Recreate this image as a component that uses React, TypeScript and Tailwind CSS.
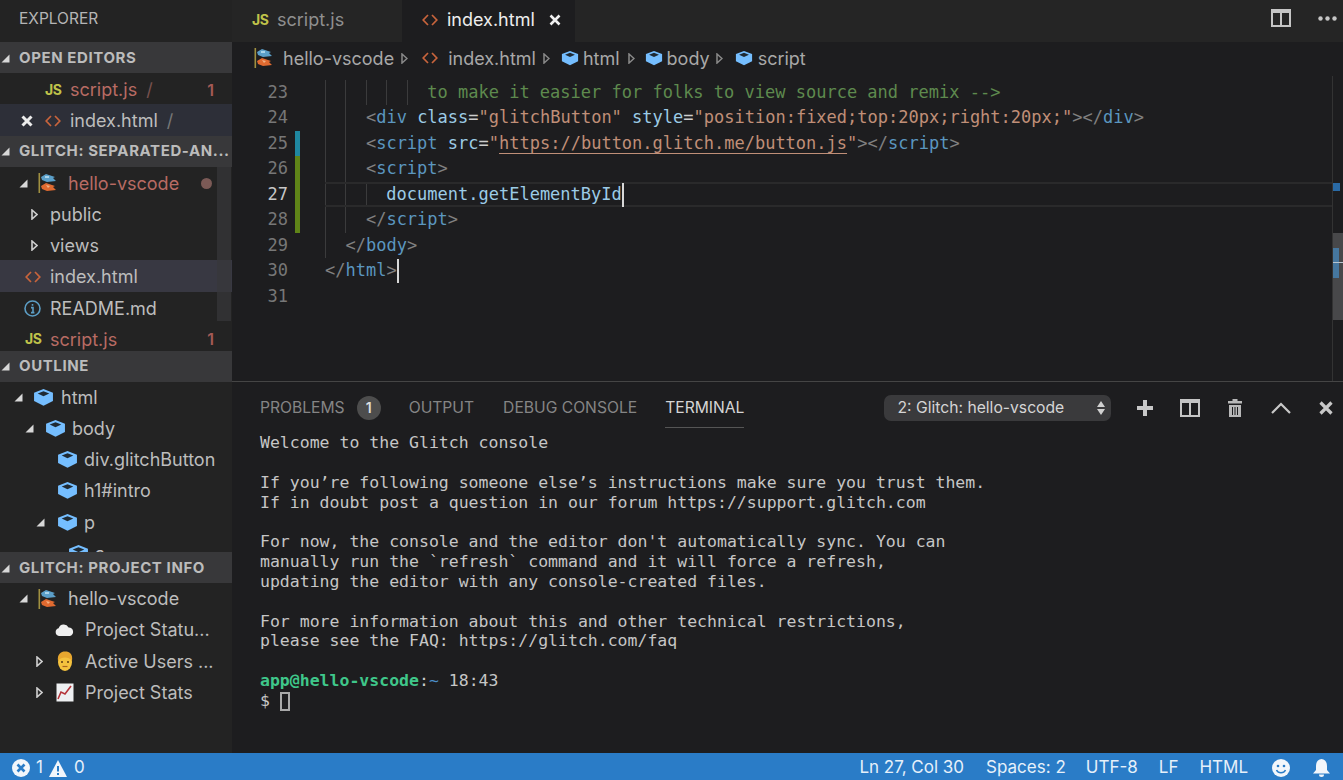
import React from "react";

const Box = ({ s = 21 }: { s?: number }) => (
  <svg width={s} height={s * 0.9} viewBox="0 0 20 18" className="shrink-0">
    <path d="M10 1 L19 4.5 V12.5 L10 17 L1 12.5 V4.5 Z" fill="#75beff" />
    <path d="M10 3 L15.5 5.2 L10 7.8 L4.5 5.2 Z" fill="#1f2a33" />
  </svg>
);
const Flag = () => (
  <svg width="18" height="20" viewBox="0 0 18 20" className="shrink-0">
    <rect x="0.5" y="0" width="1.6" height="20" fill="#a09040" />
    <path d="M3 4 L8 1 L17 4 L15 5 L18 8 L9 9 L4 7 Z" fill="#5b9fc9" />
    <path d="M7 3 L11 3 L11 5 L7 5 Z" fill="#a9d3ea" />
    <path d="M3 13 L8 10 L17 13 L15 14 L18 17 L9 18 L4 16 Z" fill="#e06a30" />
    <path d="M8 12 L12 13 L10 15 Z" fill="#f2b184" />
  </svg>
);
const Code = ({ c = "#c8643c" }: { c?: string }) => (
  <svg width="16" height="12" viewBox="0 0 16 12" fill="none" stroke={c} strokeWidth="1.7" className="shrink-0">
    <path d="M6 1 L1.2 6 L6 11 M10 1 L14.8 6 L10 11" />
  </svg>
);
const Js = () => <span className="shrink-0 w-[16px] text-[14px] font-bold text-[#c0c34a] leading-none tracking-[-0.5px]">JS</span>;
const Open = () => (
  <svg width="9" height="9" viewBox="0 0 9 9" className="shrink-0"><path d="M8.5 0.5 V8.5 H0.5 Z" fill="#d8d8d8" /></svg>
);
const Closed = () => (
  <svg width="7" height="11" viewBox="0 0 7 11" className="shrink-0"><path d="M1 1 L6 5.5 L1 10 Z" fill="#2a2a2a" stroke="#d0d0d0" strokeWidth="1.6" /></svg>
);
const Row = ({ pad, bg = "", children }: { pad: string; bg?: string; children: React.ReactNode }) => (
  <div className={`flex h-[31.25px] shrink-0 items-center whitespace-nowrap text-[18px] text-[#bdbdbd] ${pad} ${bg}`}>{children}</div>
);
const Header = ({ label }: { label: string }) => (
  <div className="flex h-[31px] shrink-0 items-center whitespace-nowrap bg-[#38383a] pl-[1px] pt-[1px] text-[15px] font-bold tracking-[0.6px] text-[#bcbcbc]">
    <span className="w-[18px]"><Open /></span>
    {label}
  </div>
);
const Err = ({ className = "" }: { className?: string }) => <span className={`text-[16px] font-semibold text-[#a35a55] ${className}`}>1</span>;

function Sidebar() {
  return (
    <div className="relative flex w-[232px] shrink-0 flex-col overflow-hidden bg-[#232323]">
      <div className="flex h-[42px] shrink-0 items-center pb-[4px] pl-[19px] text-[15.5px] text-[#b5b5b5]">EXPLORER</div>
      <Header label="OPEN EDITORS" />
      <Row pad="pl-[45px] pr-[18px] pt-[2px]"><Js /><span className="ml-[9px] text-[#b86b63]">script.js</span><span className="ml-[9px] text-[#77514e]">/</span><Err className="ml-auto" /></Row>
      <Row pad="pl-[21px] pt-[2px]" bg="bg-[#2d2f38]">
        <svg width="12" height="12" viewBox="0 0 12 12" className="shrink-0"><path d="M1.5 1.5 L10.5 10.5 M10.5 1.5 L1.5 10.5" stroke="#ececec" strokeWidth="3" /></svg>
        <span className="ml-[12px]"><Code /></span><span className="ml-[9px]">index.html</span><span className="ml-[9px] text-[#777]">/</span>
      </Row>
      <Header label="GLITCH: SEPARATED-AN..." />
      <div className="h-[184px] shrink-0 overflow-hidden">
        <Row pad="pl-[19px] pr-[20px] pt-[2px]"><Open /><span className="ml-[10px]"><Flag /></span><span className="ml-[12px] text-[#b86b63]">hello-vscode</span><span className="ml-auto h-[11px] w-[11px] rounded-full bg-[#7b5a56]" /></Row>
        <Row pad="pl-[31px] pt-[2px]"><Closed /><span className="ml-[12px]">public</span></Row>
        <Row pad="pl-[31px] pt-[2px]"><Closed /><span className="ml-[12px]">views</span></Row>
        <Row pad="pl-[25px] pt-[2px]" bg="bg-[#383842]"><Code /><span className="ml-[9px]">index.html</span></Row>
        <Row pad="pl-[24px] pt-[2px]">
          <svg width="17" height="17" viewBox="0 0 17 17" className="shrink-0"><circle cx="8.5" cy="8.5" r="7.5" fill="none" stroke="#5c9dc4" strokeWidth="1.6" /><path d="M8.5 4 V5.8 M7 7.6 H9 V12.4 M7 12.6 H10.4" stroke="#5c9dc4" strokeWidth="1.6" fill="none" /></svg>
          <span className="ml-[9px]">README.md</span>
        </Row>
        <Row pad="pl-[25px] pr-[18px] pt-[2px]"><Js /><span className="ml-[9px] text-[#b86b63]">script.js</span><Err className="ml-auto" /></Row>
      </div>
      <Header label="OUTLINE" />
      <div className="h-[170.5px] shrink-0 overflow-hidden">
        <Row pad="pl-[14px]"><Open /><span className="ml-[10px]"><Box /></span><span className="ml-[7px]">html</span></Row>
        <Row pad="pl-[25px]"><Open /><span className="ml-[11px]"><Box /></span><span className="ml-[6px]">body</span></Row>
        <Row pad="pl-[57px]"><Box /><span className="ml-[6px]">div.glitchButton</span></Row>
        <Row pad="pl-[57px]"><Box /><span className="ml-[6px]">h1#intro</span></Row>
        <Row pad="pl-[36px]"><Open /><span className="ml-[12px]"><Box /></span><span className="ml-[6px]">p</span></Row>
        <Row pad="pl-[68px]"><Box /><span className="ml-[6px]">a</span></Row>
      </div>
      <Header label="GLITCH: PROJECT INFO" />
      <div className="flex-1">
        <Row pad="pl-[19px]"><Open /><span className="ml-[10px]"><Flag /></span><span className="ml-[12px]">hello-vscode</span></Row>
        <Row pad="pl-[55px]">
          <svg width="19" height="12" viewBox="0 0 19 12" className="shrink-0"><path d="M4 12 A4 4 0 0 1 3.6 4.2 A5.5 5.5 0 0 1 13.6 3.4 A4.4 4.4 0 0 1 15 12 Z" fill="#efefef" /></svg>
          <span className="ml-[11px]">Project Statu...</span>
        </Row>
        <Row pad="pl-[36px]">
          <Closed />
          <svg width="18" height="21" viewBox="0 0 18 21" className="ml-[13px] shrink-0">
            <ellipse cx="9" cy="11" rx="7" ry="9" fill="#f5c23e" />
            <path d="M2 10 C1 3 5 0.5 9 0.5 C14 0.5 17 3 16 10 C14 7 12 6.5 9 6.5 C6 6.5 4 7 2 10 Z" fill="#e8a72f" />
            <circle cx="6" cy="11" r="1" fill="#5b3a12" /><circle cx="12" cy="11" r="1" fill="#5b3a12" />
            <path d="M6.5 15.5 H11.5" stroke="#a8641e" strokeWidth="1.2" />
          </svg>
          <span className="ml-[11px]">Active Users ...</span>
        </Row>
        <Row pad="pl-[36px]">
          <Closed />
          <svg width="18" height="19" viewBox="0 0 18 19" className="ml-[13px] shrink-0">
            <rect x="0.5" y="0.5" width="17" height="18" fill="#eef0f2" />
            <path d="M2 16 L5 9 L9 11 L15 3" fill="none" stroke="#b5343a" strokeWidth="1.6" />
          </svg>
          <span className="ml-[11px]">Project Stats</span>
        </Row>
      </div>
      <div className="absolute left-[217px] top-[167px] h-[154px] w-[14px] bg-[#38383a]/70" />
    </div>
  );
}

const P = ({ children }: { children: React.ReactNode }) => <span className="text-[#808080]">{children}</span>;
const T = ({ children }: { children: React.ReactNode }) => <span className="text-[#5b96bf]">{children}</span>;
const A = ({ children }: { children: React.ReactNode }) => <span className="text-[#9ccbe6]">{children}</span>;
const S = ({ children }: { children: React.ReactNode }) => <span className="text-[#c08f78]">{children}</span>;

const lines: { n: number; g: number; m?: string; cur?: boolean; c?: React.ReactNode }[] = [
  { n: 23, g: 5, c: <span className="text-[#5e8a4e]">to make it easier for folks to view source and remix --&gt;</span> },
  { n: 24, g: 2, c: <><P>&lt;</P><T>div</T> <A>class</A><span className="text-[#ccc]">=</span><S>"glitchButton"</S> <A>style</A><span className="text-[#ccc]">=</span><S>"position:fixed;top:20px;right:20px;"</S><P>&gt;&lt;/</P><T>div</T><P>&gt;</P></> },
  { n: 25, g: 2, m: "bg-[#1f87a0]", c: <><P>&lt;</P><T>script</T> <A>src</A><span className="text-[#ccc]">=</span><S>"<span className="underline underline-offset-4">https://button.glitch.me/button.js</span>"</S><P>&gt;&lt;/</P><T>script</T><P>&gt;</P></> },
  { n: 26, g: 2, m: "bg-[#5f8418]", c: <><P>&lt;</P><T>script</T><P>&gt;</P></> },
  { n: 27, g: 3, m: "bg-[#5f8418]", cur: true, c: <><A>document.getElementById</A><span className="inline-block h-[24px] w-[2px] bg-[#d8d8d8] align-middle" /></> },
  { n: 28, g: 2, m: "bg-[#5f8418]", c: <><P>&lt;/</P><T>script</T><P>&gt;</P></> },
  { n: 29, g: 1, c: <><P>&lt;/</P><T>body</T><P>&gt;</P></> },
  { n: 30, g: 0, c: <><P>&lt;/</P><T>html</T><P>&gt;</P><span className="inline-block h-[24px] w-[2px] bg-[#d8d8d8] align-middle" /></> },
  { n: 31, g: 0 },
];

const Crumb = ({ children }: { children: React.ReactNode }) => <span className="flex items-center text-[18px] text-[#a8a8a8]">{children}</span>;
const Sep = ({ className }: { className: string }) => <svg width="7" height="11" viewBox="0 0 7 11" className={`shrink-0 ${className}`}><path d="M1 1 L6 5.5 L1 10 Z" fill="none" stroke="#8a8a8a" strokeWidth="1.5" /></svg>;

function Editor() {
  return (
    <div className="flex h-[381px] shrink-0 flex-col overflow-hidden bg-[#1d1d1f]">
      <div className="flex h-[42px] shrink-0 items-stretch whitespace-nowrap bg-[#252525]">
        <div className="flex w-[170px] items-center pb-[3px] pl-[20px] text-[18px] text-[#8f8f8f]">
          <Js /><span className="ml-[9px]">script.js</span>
        </div>
        <div className="flex w-[173px] items-center bg-[#1d1d1f] pb-[3px] pl-[20px] text-[18px] text-[#ededed]">
          <Code /><span className="ml-[9px]">index.html</span>
          <svg width="12" height="12" viewBox="0 0 12 12" className="ml-[14px]"><path d="M1.5 1.5 L10.5 10.5 M10.5 1.5 L1.5 10.5" stroke="#f0f0f0" strokeWidth="2.6" /></svg>
        </div>
        <div className="ml-auto flex items-center gap-[27px] pb-[6px] pr-[6px]">
          <svg width="20" height="18" viewBox="0 0 20 18" fill="none" stroke="#c5c5c5" strokeWidth="2"><path d="M1 1 H19 V17 H1 Z M10 1 V17 M1 3 H19" /></svg>
          <svg width="19" height="5" viewBox="0 0 19 5" fill="#c5c5c5"><circle cx="2.5" cy="2.5" r="2.2" /><circle cx="9.5" cy="2.5" r="2.2" /><circle cx="16.5" cy="2.5" r="2.2" /></svg>
        </div>
      </div>
      <div className="flex h-[34px] shrink-0 items-center pb-[2px] pl-[22px] whitespace-nowrap">
        <Crumb><Flag /><span className="ml-[11px]">hello-vscode</span></Crumb><Sep className="ml-[7px] mr-[14px]" />
        <Crumb><Code /><span className="ml-[10px]">index.html</span></Crumb><Sep className="ml-[7px] mr-[11px]" />
        <Crumb><Box s={18} /><span className="ml-[4px]">html</span></Crumb><Sep className="ml-[8px] mr-[10px]" />
        <Crumb><Box s={18} /><span className="ml-[4px]">body</span></Crumb><Sep className="ml-[6px] mr-[12px]" />
        <Crumb><Box s={18} /><span className="ml-[5px]">script</span></Crumb>
      </div>
      <div className="flex min-h-0 flex-1">
        <div className="min-w-0 flex-1 pt-[3.5px] font-[family-name:'DejaVu_Sans_Mono'] text-[17px]">
          {lines.map((l) => (
            <div key={l.n} className="flex h-[25.5px] whitespace-pre">
              <span className={`w-[56px] shrink-0 text-right leading-[25.5px] ${l.cur ? "text-[#c6c6c6]" : "text-[#777]"}`}>{l.n}</span>
              <span className="w-[7px] shrink-0" />
              <span className={`w-[5px] shrink-0 ${l.m ?? ""}`} />
              <span className="w-[25px] shrink-0" />
              <div className={`flex flex-1 items-center ${l.cur ? "border-y-2 border-[#2a2a2b]" : ""}`}>
                {Array.from({ length: l.g }).map((_, i) => (
                  <span key={i} className="h-full w-[20.46px] shrink-0 border-l border-[#3b3b3c]" />
                ))}
                <span className="leading-[25.5px]">{l.c}</span>
              </div>
            </div>
          ))}
        </div>
        <div className="relative w-[11px] shrink-0 border-l border-[#333]">
          <div className="absolute left-0 top-[107px] h-[8px] w-[7px] bg-[#2a6aa5]" />
          <div className="absolute inset-x-0 top-[157px] h-[87px] bg-[#48484a]" />
          <div className="absolute left-0 top-[172px] h-[30px] w-[6px] bg-[#46779f]" />
          <div className="absolute inset-x-0 top-[186px] h-px bg-[#b8c4cf]" />
        </div>
      </div>
    </div>
  );
}

const terminal: React.ReactNode[] = [
  "Welcome to the Glitch console",
  "",
  "If you’re following someone else’s instructions make sure you trust them.",
  "If in doubt post a question in our forum https://support.glitch.com",
  "",
  "For now, the console and the editor don't automatically sync. You can",
  "manually run the `refresh` command and it will force a refresh,",
  "updating the editor with any console-created files.",
  "",
  "For more information about this and other technical restrictions,",
  "please see the FAQ: https://glitch.com/faq",
  "",
  <><span className="font-bold text-[#3fc78a]">app@hello-vscode</span><span className="text-[#ccc]">:</span><span className="text-[#4c8fc7]">~</span> 18:43</>,
  <>$ <span className="inline-block h-[19px] w-[10px] border-2 border-[#a8a8a8] align-middle" /></>,
];

function Panel() {
  return (
    <div className="flex min-h-0 flex-1 flex-col overflow-hidden border-t border-[#454545] bg-[#1d1d1f]">
      <div className="flex h-[50px] shrink-0 items-center whitespace-nowrap pl-[28px] pt-[1px] text-[15.65px] text-[#858585]">
        <span>PROBLEMS</span>
        <span className="ml-[12px] flex h-[24px] w-[24px] items-center justify-center rounded-full bg-[#4d4d4d] text-[14px] font-semibold text-[#dedede]">1</span>
        <span className="ml-[28px]">OUTPUT</span>
        <span className="ml-[29px]">DEBUG CONSOLE</span>
        <span className="relative ml-[28px] text-[#d5d5d5]">TERMINAL<span className="absolute inset-x-0 top-[31px] h-px bg-[#555]" /></span>
        <div className="ml-[140px] flex h-[26px] w-[227px] items-center justify-between rounded-[7px] bg-[#3a3a3c] pl-[13px] pr-[6px] text-[15.7px] text-[#d5d5d5]">
          2: Glitch: hello-vscode
          <svg width="8" height="16" viewBox="0 0 8 16" fill="#d0d0d0"><path d="M4 1 L8 7 H0 Z M4 15 L8 9 H0 Z" /></svg>
        </div>
        <div className="ml-[24px] flex items-center gap-[25px]">
          <svg width="20" height="18" viewBox="0 0 18 18" fill="#c8c8c8"><path d="M7 1 H11 V7 H17 V11 H11 V17 H7 V11 H1 V7 H7 Z" /></svg>
          <svg width="20" height="18" viewBox="0 0 20 18" fill="none" stroke="#c5c5c5" strokeWidth="2"><path d="M1 1 H19 V17 H1 Z M10 1 V17 M1 3 H19" /></svg>
          <svg width="20" height="20" viewBox="0 0 16 20" fill="#b8b8b8"><path d="M5.5 1 H10.5 V3 H15 V5.5 H1 V3 H5.5 Z M2 7 H14 V19 H2 Z" /><path d="M5.5 9 V17 M8 9 V17 M10.5 9 V17" stroke="#1d1d1f" strokeWidth="1" /></svg>
          <svg width="20" height="12" viewBox="0 0 20 12" fill="none" stroke="#c8c8c8" strokeWidth="2.2" className="ml-[1px]"><path d="M1 11 L10 2 L19 11" /></svg>
          <svg width="14" height="14" viewBox="0 0 14 14" className="ml-[3px]"><path d="M1.5 1.5 L12.5 12.5 M12.5 1.5 L1.5 12.5" stroke="#c8c8c8" strokeWidth="3.2" /></svg>
        </div>
      </div>
      <div className="pt-px pl-[28px] font-[family-name:'DejaVu_Sans_Mono'] text-[16.5px] leading-[19.85px] text-[#c6c6c6] whitespace-pre">
        {terminal.map((t, i) => <div key={i} className="h-[19.85px]">{t}</div>)}
      </div>
    </div>
  );
}

function StatusBar() {
  return (
    <div className="flex h-[27px] shrink-0 items-center whitespace-nowrap bg-[#2a7cc7] pl-[12px] pt-[3px] text-[17px] text-[#e6f0fa]">
      <svg width="18" height="18" viewBox="0 0 18 18"><circle cx="9" cy="9" r="9" fill="#f2f6fb" /><path d="M5.5 5.5 L12.5 12.5 M12.5 5.5 L5.5 12.5" stroke="#2a7cc7" strokeWidth="2.6" /></svg>
      <span className="ml-[6px]">1</span>
      <svg width="18" height="17" viewBox="0 0 18 17" className="ml-[6px]"><path d="M9 0 L18 17 H0 Z" fill="#f2f6fb" /><path d="M9 6 V11.5 M9 13 V15" stroke="#2a7cc7" strokeWidth="2" /></svg>
      <span className="ml-[7px]">0</span>
      <div className="ml-auto flex items-center pr-[13px]">
        <span>Ln 27, Col 30</span>
        <span className="ml-[22px]">Spaces: 2</span>
        <span className="ml-[20px]">UTF-8</span>
        <span className="ml-[21px]">LF</span>
        <span className="ml-[21px]">HTML</span>
        <svg width="18" height="18" viewBox="0 0 18 18" className="ml-[24px]"><circle cx="9" cy="9" r="9" fill="#f2f6fb" /><circle cx="6" cy="7" r="1.3" fill="#2a7cc7" /><circle cx="12" cy="7" r="1.3" fill="#2a7cc7" /><path d="M4.5 11 A5 5 0 0 0 13.5 11" fill="none" stroke="#2a7cc7" strokeWidth="1.5" /></svg>
        <svg width="17" height="18" viewBox="0 0 17 18" className="ml-[23px]" fill="#f2f6fb"><path d="M8.5 0 C12 0.5 14 3 14 7 V11 L17 14.5 H0 L3 11 V7 C3 3 5 0.5 8.5 0 Z" /><path d="M6 15.5 H11 A2.5 2.5 0 0 1 6 15.5 Z" /></svg>
      </div>
    </div>
  );
}

export default function App() {
  return (
    <div className="flex h-[780px] w-[1343px] flex-col overflow-hidden bg-[#1d1d1f] font-[family-name:Inter,'Liberation_Sans',sans-serif]">
      <div className="flex min-h-0 flex-1">
        <Sidebar />
        <div className="flex min-w-0 flex-1 flex-col">
          <Editor />
          <Panel />
        </div>
      </div>
      <StatusBar />
    </div>
  );
}
